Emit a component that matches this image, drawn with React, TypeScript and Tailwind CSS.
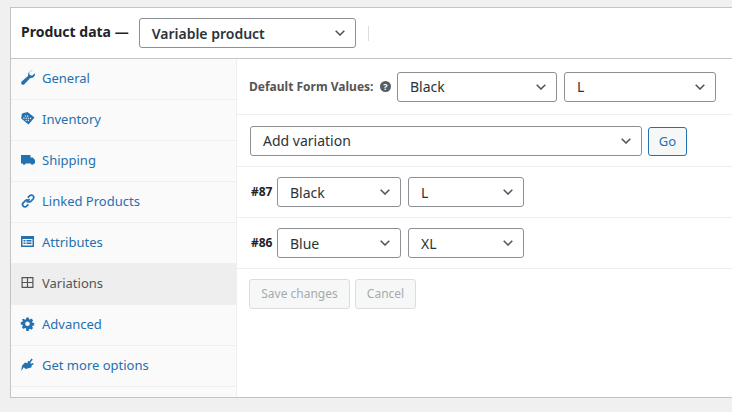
import React from "react";

const font = "font-['Noto_Sans',sans-serif]";

function Chevron() {
  return (
    <svg width="10" height="6" viewBox="0 0 10 6" className="shrink-0">
      <path d="M0.7 0.8 L5 5 L9.3 0.8" fill="none" stroke="#50575e" strokeWidth="1.6" />
    </svg>
  );
}

function Select({ label, w, bold, pr = "pr-2.5" }: { label: string; w: string; bold?: boolean; pr?: string }) {
  return (
    <div className={`${w} h-[30px] shrink-0 flex items-center justify-between pl-[12px] ${pr} bg-white border border-[#8c8f94] rounded-[3px] text-[14px] text-[#2c3338] ${bold ? "font-semibold" : ""}`}>
      <span>{label}</span>
      <Chevron />
    </div>
  );
}

const icons: Record<string, React.ReactNode> = {
  General: <path d="M13.2 1.2c-1.5-.5-3.2-.1-4.2 1-.9 1-1.2 2.3-.8 3.6L1.7 11.6c-.8.8-.7 2 0 2.7.8.7 1.9.7 2.6 0l6-6.3c1.2.3 2.5 0 3.4-.9 1-1 1.4-2.4 1-3.8l-2.6 2.5-2.4-.7-.6-2.3 2.5-2.4z" />,
  Inventory: (
    <>
      <path fillRule="evenodd" d="M7.5 1 14.5 6.6 8.5 13.5 1.2 7.6 2 2.5zM5.4 4.2l-.8.9.9.7.8-.9zm2.2.1-.8.9.9.7.8-.9zm-3.7 2-.8.9.9.7.8-.9zm2.2.1-.8.9.9.7.8-.9zm2.2.1-.8.9.9.7.8-.9zm2.2.1-.8.9.9.7.8-.9zM6.1 8.5l-.8.9.9.7.8-.9zm2.2.1-.8.9.9.7.8-.9z" />
    </>
  ),
  Shipping: (
    <path d="M1 3h9.5v2.4h2.2L15 8v3.6h-1.2a1.6 1.6 0 0 1-3.1 0H5.7a1.6 1.6 0 0 1-3.1 0H1z" />
  ),
  "Linked Products": (
    <g fill="none" stroke="currentColor" strokeWidth="1.7">
      <path d="M6.6 9.4 9.6 6.2" />
      <path d="M7.8 4.6 9.6 2.8a2.3 2.3 0 0 1 3.4 0 2.4 2.4 0 0 1 0 3.3L10.8 8.3a2.3 2.3 0 0 1-2.6.4" />
      <path d="M8 7.2a2.3 2.3 0 0 0-2.6.4L3.2 9.9a2.4 2.4 0 0 0 0 3.3 2.3 2.3 0 0 0 3.4 0l1.8-1.8" />
    </g>
  ),
  Attributes: (
    <path fillRule="evenodd" d="M1 2h13v11H1zM2.5 5v6.5h10V5zM3.5 6h2v1.4h-2zm3 0h5v1.4h-5zM3.5 8.6h2V10h-2zm3 0h5V10h-5z" />
  ),
  Variations: (
    <path fillRule="evenodd" d="M1.5 2h12v11h-12zM2.7 3.2v3.7h4.2V3.2zm5.4 0v3.7h4.2V3.2zM2.7 8.1v3.7h4.2V8.1zm5.4 0v3.7h4.2V8.1z" />
  ),
  Advanced: (
    <path fillRule="evenodd" d="M6.3 1.5h2.4l.3 1.7 1 .4 1.4-1 1.7 1.7-1 1.4.4 1 1.7.3v2.4l-1.7.3-.4 1 1 1.4-1.7 1.7-1.4-1-1 .4-.3 1.7H6.3L6 12.3l-1-.4-1.4 1L1.9 11.2l1-1.4-.4-1L.8 8.5V6.100l1.700-.3.4-1-1-1.400L3.600 2.700l1.400 1 1-.4zM7.500 5.400a2.300 2.300 0 1 0 0 4.600 2.300 2.300 0 0 0 0-4.600z" />
  ),
  "Get more options": (
    <path d="M11.500 1.500 12.800 2.800 10.300 5.300 11.100 5.600 10.200 6.900 13 5.900 13.700 7.200 11.800 8.300 11.300 10.500 5.700 12 3.800 10.200 1.200 14 2 8.800 3.600 7 5 5.500 7.500 6.300 8 3.800 9.300 4.600z" />
  ),
};

const tabs = ["General", "Inventory", "Shipping", "Linked Products", "Attributes", "Variations", "Advanced", "Get more options"];

function Tab({ name }: { name: string }) {
  const active = name === "Variations";
  return (
    <div className={`h-[41px] shrink-0 flex items-center pl-[9px] text-[13px] border-b ${active ? "bg-[#eeeeee] border-[#eeeeee] text-[#555555]" : "border-[#eeeeee] text-[#2271b1]"}`}>
      <svg width="15" height="15" viewBox="0 0 15 15" fill="currentColor" className="shrink-0 mr-[7px] -mt-[3px]">
        {icons[name]}
      </svg>
      <span className="pb-px">{name}</span>
    </div>
  );
}

export default function App() {
  return (
    <div className={`w-[732px] h-[412px] overflow-hidden bg-[#f0f0f1] pt-[7px] pl-[10px] ${font}`}>
      <div className="w-[740px] h-[391px] bg-white border border-[#c3c4c7] flex flex-col">
        <div className="h-[51px] shrink-0 border-b border-[#c3c4c7] flex items-center pl-[10px]">
          <span className="text-[14px] font-bold text-[#1d2327] mr-[10px] -mt-[3px]">Product data —</span>
          <Select label="Variable product" w="w-[217px]" bold />
          <div className="w-px h-[15px] bg-[#dddddd] ml-[12px]" />
        </div>
        <div className="flex flex-1 min-h-0">
          <div className="w-[226px] shrink-0 bg-[#fafafa] border-r border-[#eeeeee] flex flex-col">
            {tabs.map((t) => (
              <Tab key={t} name={t} />
            ))}
          </div>
          <div className="flex-1 flex flex-col">
            <div className="h-[56px] shrink-0 border-b border-[#eeeeee] flex items-center pl-[12px]">
              <span className="w-[131px] shrink-0 text-[12px] font-bold text-[#555555]">Default Form Values:</span>
              <span className="w-[11px] h-[11px] rounded-full bg-[#555d66] text-white text-[9px] font-bold flex items-center justify-center mr-[6px] shrink-0">?</span>
              <Select label="Black" w="w-[160px]" />
              <div className="w-[7px] shrink-0" />
              <Select label="L" w="w-[152px]" />
            </div>
            <div className="h-[52px] shrink-0 border-b border-[#eeeeee] flex items-center pl-[13px]">
              <Select label="Add variation" w="w-[392px]" />
              <div className="w-[39px] h-[29px] ml-[6px] mt-[2px] shrink-0 flex items-center justify-center rounded-[3px] border border-[#2271b1] bg-[#f6f7f7] text-[#2271b1] text-[13px]">Go</div>
            </div>
            <div className="h-[51px] shrink-0 border-b border-[#eeeeee] flex items-center pl-[14px]">
              <span className="w-[26px] shrink-0 text-[12px] font-bold text-[#1d2327]">#87</span>
              <Select label="Black" w="w-[124px]" />
              <div className="w-[7px] shrink-0" />
              <Select label="L" w="w-[116px]" />
            </div>
            <div className="h-[51px] shrink-0 border-b border-[#eeeeee] flex items-center pl-[14px]">
              <span className="w-[26px] shrink-0 text-[12px] font-bold text-[#1d2327]">#86</span>
              <Select label="Blue" w="w-[124px]" />
              <div className="w-[7px] shrink-0" />
              <Select label="XL" w="w-[116px]" />
            </div>
            <div className="flex pl-[12px] pt-[10px] gap-[5px]">
              <div className="w-[101px] h-[30px] flex items-center justify-center rounded-[3px] border border-[#dcdcde] bg-[#f6f7f7] text-[#a7aaad] text-[12px]">Save changes</div>
              <div className="w-[61px] h-[30px] flex items-center justify-center rounded-[3px] border border-[#dcdcde] bg-[#f6f7f7] text-[#a7aaad] text-[12px]">Cancel</div>
            </div>
          </div>
        </div>
      </div>
    </div>
  );
}
